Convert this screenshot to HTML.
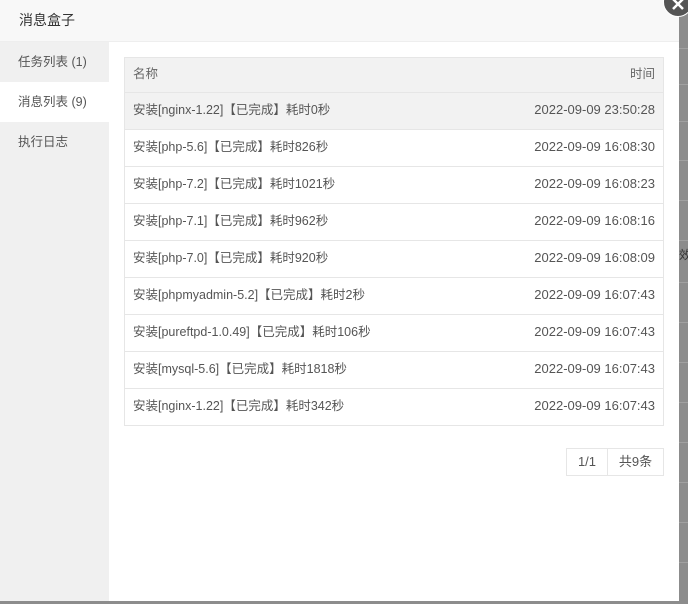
<!DOCTYPE html>
<html><head><style>
body{margin:0;width:688px;height:604px;overflow:hidden;background:#8c8c8c;font-family:"Liberation Sans","Noto Sans CJK SC",sans-serif;font-size:12.5px;color:#555;position:relative}
.bgl{position:absolute;left:679px;width:9px;height:1px;background:#a0a0a0}
.modal{position:absolute;left:0;top:0;width:679px;height:601px;background:#fff}
.hd{height:41px;background:#f8f8f8;border-bottom:1px solid #eee;line-height:41px;padding-left:19px;font-size:14px;color:#333}
.side{position:absolute;left:0;top:42px;width:109px;bottom:0;background:#f0f0f0}
.side div{height:40px;line-height:40px;padding-left:18px;color:#555;font-size:12.5px}
.side .on{background:#fff}
.tbl{position:absolute;left:124px;top:57px;width:538px;border:1px solid #e6e6e6;border-bottom:none}
.row{height:36px;border-bottom:1px solid #e6e6e6;line-height:34px;padding:0 8px;display:flex;justify-content:space-between;white-space:nowrap}
.row.h{height:34px;line-height:33px;background:#f2f2f2;color:#666}
.row.g{background:#f2f2f2}
.row .r{font-size:13px}
.pg{position:absolute;left:566px;top:448px;width:96px;height:26px;border:1px solid #e6e6e6;line-height:26px;font-size:13px;color:#555;white-space:nowrap}
.pg span{position:absolute;top:0;text-align:center}
.close{position:absolute;left:663px;top:-13px;width:28px;height:28px;border-radius:50%;background:#555;border:1px solid #fff}
</style></head><body>
<div class="bgl" style="top:48px"></div><div class="bgl" style="top:84px"></div><div class="bgl" style="top:121px"></div><div class="bgl" style="top:160px"></div><div class="bgl" style="top:200px"></div><div class="bgl" style="top:240px"></div><div class="bgl" style="top:282px"></div><div class="bgl" style="top:322px"></div><div class="bgl" style="top:362px"></div><div class="bgl" style="top:402px"></div><div class="bgl" style="top:442px"></div><div class="bgl" style="top:482px"></div><div class="bgl" style="top:522px"></div><div class="bgl" style="top:562px"></div>
<div style="position:absolute;left:679px;top:246px;font-size:12px;color:#333">效</div>
<div class="modal">
<div class="hd">消息盒子</div>
<div class="side"><div>任务列表 (1)</div><div class="on">消息列表 (9)</div><div>执行日志</div></div>
<div class="tbl">
<div class="row h"><span>名称</span><span>时间</span></div>
<div class="row g"><span>安装[nginx-1.22]【已完成】耗时0秒</span><span class="r">2022-09-09 23:50:28</span></div>
<div class="row"><span>安装[php-5.6]【已完成】耗时826秒</span><span class="r">2022-09-09 16:08:30</span></div>
<div class="row"><span>安装[php-7.2]【已完成】耗时1021秒</span><span class="r">2022-09-09 16:08:23</span></div>
<div class="row"><span>安装[php-7.1]【已完成】耗时962秒</span><span class="r">2022-09-09 16:08:16</span></div>
<div class="row"><span>安装[php-7.0]【已完成】耗时920秒</span><span class="r">2022-09-09 16:08:09</span></div>
<div class="row"><span>安装[phpmyadmin-5.2]【已完成】耗时2秒</span><span class="r">2022-09-09 16:07:43</span></div>
<div class="row"><span>安装[pureftpd-1.0.49]【已完成】耗时106秒</span><span class="r">2022-09-09 16:07:43</span></div>
<div class="row"><span>安装[mysql-5.6]【已完成】耗时1818秒</span><span class="r">2022-09-09 16:07:43</span></div>
<div class="row"><span>安装[nginx-1.22]【已完成】耗时342秒</span><span class="r">2022-09-09 16:07:43</span></div>
</div>
<div class="pg"><span style="left:0;width:40px;border-right:1px solid #e6e6e6">1/1</span><span style="left:41px;width:55px">共9条</span></div>
</div>
<div class="close"><svg width="28" height="28" style="position:absolute;left:0;top:0"><path d="M9 11L19 21M19 11L9 21" stroke="#fff" stroke-width="2.5"/></svg></div>
</body></html>
